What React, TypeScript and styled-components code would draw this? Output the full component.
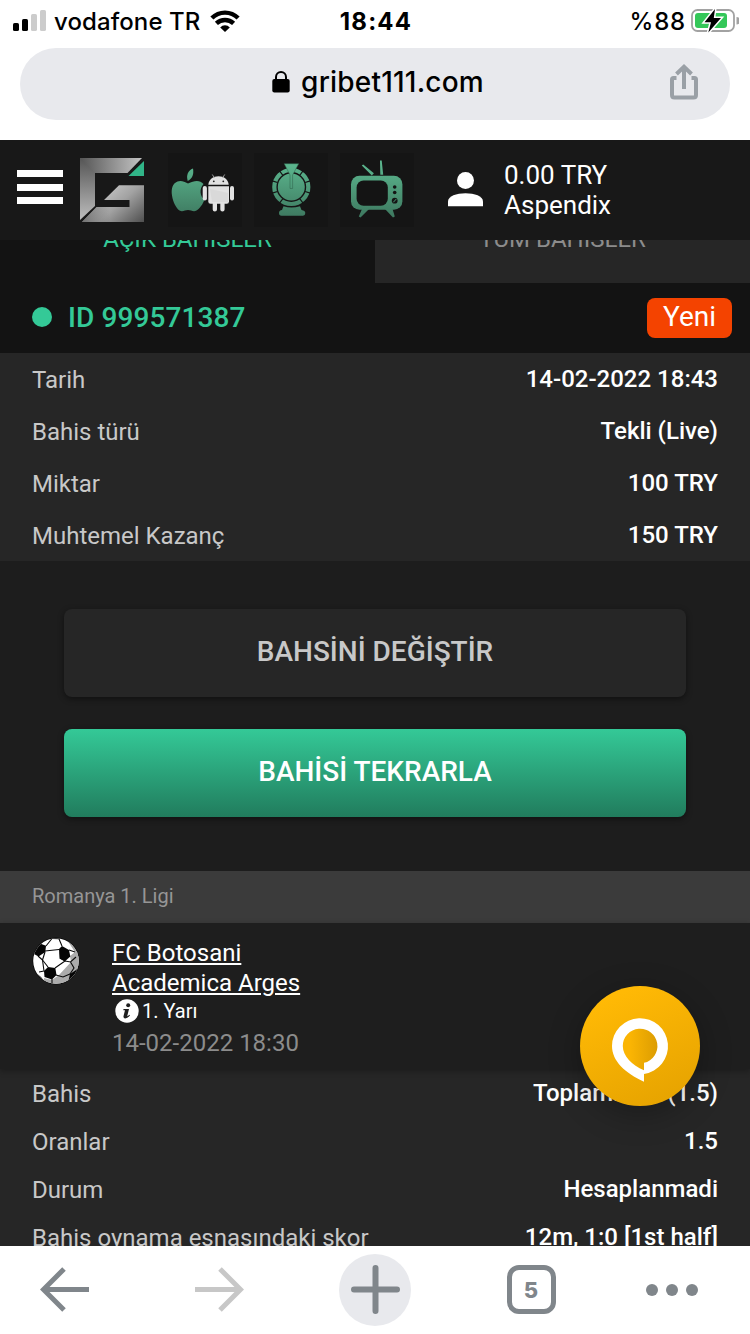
import React from "react";
import styled, { createGlobalStyle } from "styled-components";

const GlobalStyle = createGlobalStyle`
  * { box-sizing: border-box; }
  body { margin: 0; background: #1d1d1d; }
  svg { display: block; flex: none; }
`;

const Screen = styled.div`
  width: 750px;
  height: 1334px;
  overflow: hidden;
  display: flex;
  flex-direction: column;
  background: #1d1d1d;
  font-family: Roboto, "Liberation Sans", sans-serif;
  font-size: 24px;
  color: #fff;
`;

/* Browser chrome */

const BrowserTop = styled.div`
  flex: none;
  height: 140px;
  background: #fff;
  color: #000;
  font-family: Inter, "Liberation Sans", sans-serif;
`;

const StatusBar = styled.div`
  height: 48px;
  padding: 0 11px 8px 13px;
  display: grid;
  grid-template-columns: 1fr auto 1fr;
  align-items: center;
`;

const StatusGroup = styled.div<{ $end?: boolean }>`
  display: flex;
  align-items: center;
  justify-content: ${(p) => (p.$end ? "flex-end" : "flex-start")};
`;

const StatusText = styled.span<{ $bold?: boolean; $spacing: number }>`
  font-size: 24px;
  line-height: 40px;
  padding-top: 2px;
  font-weight: ${(p) => (p.$bold ? 700 : 500)};
  letter-spacing: ${(p) => p.$spacing}px;
`;

const Carrier = styled(StatusText)`
  margin: 0 9px 0 8px;
`;

const BatteryLevel = styled(StatusText)`
  margin-right: 5px;
`;

const AddressBar = styled.div`
  height: 72px;
  margin: 0 20px;
  padding: 0 31px 4px 29px;
  border-radius: 36px;
  background: #e8e9ed;
  display: grid;
  grid-template-columns: 30px 1fr 30px;
  align-items: center;
`;

const Address = styled.div`
  grid-column: 2;
  display: flex;
  justify-content: center;
  align-items: center;
  gap: 11px;
  padding-left: 8px;
  font-size: 28px;
  line-height: 40px;
  font-weight: 550;
  letter-spacing: 0.2px;
`;

/* Site header */

const SiteHeader = styled.header`
  flex: none;
  height: 100px;
  padding: 0 17px;
  background: #181818;
  display: flex;
  align-items: center;
`;

const MenuButton = styled.button`
  width: 46px;
  height: 34px;
  padding: 0;
  margin: 0 17px 6px 0;
  border: 0;
  background: none;
  display: flex;
  flex-direction: column;
  justify-content: space-between;
`;

const MenuLine = styled.span`
  height: 7px;
  background: #fff;
`;

const Shortcuts = styled.nav`
  display: flex;
  gap: 12px;
  margin: 0 34px 0 24px;
`;

const Shortcut = styled.div`
  width: 74px;
  height: 74px;
  background: #151515;
`;

const Account = styled.div`
  margin-left: 21px;
  font-size: 26px;
  line-height: 30px;
`;

/* Bet slip */

const Tabs = styled.div`
  flex: none;
  height: 43px;
  overflow: hidden;
  display: flex;
  align-items: flex-end;
`;

const Tab = styled.div<{ $active?: boolean }>`
  flex: 1;
  height: 88px;
  display: flex;
  align-items: center;
  justify-content: center;
  font-size: 24px;
  background: ${(p) => (p.$active ? "#131313" : "#262626")};
  color: ${(p) => (p.$active ? "#34c997" : "#8c8c8c")};
`;

const BetHeader = styled.div`
  flex: none;
  height: 70px;
  padding: 0 18px 0 32px;
  background: #131313;
  display: flex;
  align-items: center;
`;

const Dot = styled.span`
  width: 20px;
  height: 20px;
  border-radius: 50%;
  margin: 0 16px 2px 0;
  background: #34c997;
`;

const BetId = styled.span`
  flex: 1;
  padding-bottom: 2px;
  font-size: 28px;
  font-weight: 500;
  letter-spacing: 0.1px;
  color: #34c997;
`;

const Badge = styled.span`
  width: 85px;
  height: 40px;
  border-radius: 8px;
  background: #f44300;
  font-size: 28px;
  line-height: 38px;
  text-align: center;
`;

const Rows = styled.dl`
  flex: none;
  margin: 0;
  background: #262626;
`;

const Row = styled.div<{ $height: number }>`
  height: ${(p) => p.$height}px;
  padding: 0 32px;
  display: flex;
  justify-content: space-between;
  align-items: center;
  line-height: 28px;
`;

const Label = styled.dt`
  color: #c8c8c8;
  padding-top: 2px;
`;

const Value = styled.dd`
  margin: 0;
  font-weight: 500;
`;

const Actions = styled.div`
  flex: none;
  height: 310px;
  padding: 48px 64px 0;
  display: flex;
  flex-direction: column;
  gap: 32px;
`;

const ActionButton = styled.button<{ $primary?: boolean }>`
  height: 88px;
  border: 0;
  border-radius: 8px;
  padding: 0 0 4px;
  font: 500 28px Roboto, "Liberation Sans", sans-serif;
  color: ${(p) => (p.$primary ? "#fff" : "#c8c8c8")};
  background: ${(p) => (p.$primary ? "linear-gradient(#34c997, #217c5d)" : "#262626")};
  box-shadow: 0 2px 6px rgba(0, 0, 0, 0.45);
`;

const League = styled.div`
  flex: none;
  height: 52px;
  padding: 0 32px;
  line-height: 51px;
  font-size: 20px;
  color: #969696;
  background: #3b3b3b;
`;

const Match = styled.div`
  flex: none;
  height: 146px;
  padding: 14px 32px 0;
  display: flex;
  gap: 32px;
  background: #1e1e1e;
  box-shadow: 0 2px 6px rgba(0, 0, 0, 0.3);
  z-index: 1;
`;

const Teams = styled.div`
  padding-top: 1px;
`;

const Team = styled.div`
  height: 30px;
  line-height: 30px;
  text-decoration: underline;
  text-decoration-thickness: 2px;
  text-underline-offset: 2px;
`;

const Period = styled.div`
  height: 26px;
  margin-bottom: 1px;
  padding-left: 3px;
  display: flex;
  align-items: center;
  gap: 3px;
  font-size: 20px;
  line-height: 24px;
`;

const Kickoff = styled.div`
  line-height: 36px;
  color: #8c8c8c;
`;

const DetailRows = styled(Rows)`
  flex: 1 1 0;
  min-height: 0;
  overflow: hidden;
`;

const ChatButton = styled.button`
  position: absolute;
  left: 580px;
  top: 986px;
  z-index: 2;
  width: 120px;
  height: 120px;
  padding: 0;
  border: 0;
  border-radius: 50%;
  background: linear-gradient(155deg, #ffb905 15%, #e5a200 95%);
  box-shadow: 0 8px 32px rgba(0, 0, 0, 0.28);
`;

/* Browser toolbar */

const Toolbar = styled.nav`
  flex: none;
  height: 88px;
  padding-bottom: 1px;
  background: #fff;
  display: grid;
  grid-template-columns: 129px 181px 130px 182px 100px;
  justify-items: center;
  align-items: center;
  z-index: 1;
`;

const NewTab = styled.div`
  width: 72px;
  height: 72px;
  border-radius: 50%;
  background: #e8e9ed;
  display: grid;
  place-items: center;
`;

const TabCount = styled.div`
  width: 49px;
  height: 49px;
  border: 5px solid #80868b;
  border-radius: 12px;
  font: 800 22px/41px Inter, "Liberation Sans", sans-serif;
  text-align: center;
  color: #80868b;
`;

const Signal = () => (
  <svg width="33" height="22" viewBox="0 0 33 22">
    <rect x="0" y="13" width="6" height="8" rx="1.6" fill="#000" />
    <rect x="9" y="9" width="6" height="12" rx="1.6" fill="#000" />
    <rect x="18" y="4" width="6" height="17" rx="1.6" fill="#ccc" />
    <rect x="27" y="0" width="6" height="21" rx="1.6" fill="#ccc" />
  </svg>
);

const Wifi = () => (
  <svg width="30" height="22" viewBox="0 0 30 22">
    <g fill="none" stroke="#000" strokeWidth="4.4">
      <path d="M1.9 8A18.6 18.6 0 0 1 28.1 8" />
      <path d="M6.4 13.4A12.4 12.4 0 0 1 23.6 13.4" />
    </g>
    <path d="M15 22L10.2 17.4A6.6 6.6 0 0 1 19.8 17.4Z" fill="#000" />
  </svg>
);

const Battery = () => (
  <svg width="48" height="24" viewBox="0 0 48 24">
    <rect x="1" y="1" width="42" height="21" rx="5.5" fill="none" stroke="#a2a2a2" strokeWidth="1.8" />
    <rect x="4" y="4" width="32" height="15" rx="3" fill="#34c759" />
    <path d="M45.5 8a3.6 3.6 0 0 1 0 7.5z" fill="#a2a2a2" />
    <path d="M24 0L13.5 13.2H20L17.3 23.5L30 9H22.8Z" fill="#000" stroke="#fff" strokeWidth="3" />
    <path d="M24 0L13.5 13.2H20L17.3 23.5L30 9H22.8Z" fill="#000" />
  </svg>
);

const Lock = () => (
  <svg width="18" height="22" viewBox="0 0 18 22">
    <path d="M4 9V6a5 5 0 0 1 10 0v3" fill="none" stroke="#000" strokeWidth="2" />
    <rect x="0.3" y="8" width="17.4" height="13.5" rx="2" fill="#000" />
  </svg>
);

const Share = () => (
  <svg width="30" height="36" viewBox="0 0 30 36" fill="none" stroke="#9aa0a6" strokeWidth="4">
    <path d="M7.5 14H4.5Q3 14 3 15.5V31Q3 33.5 5.5 33.5H24.5Q27 33.5 27 31V15.5Q27 14 25.5 14H22.5" />
    <path d="M15 25V3M7.5 10L15 2.8L22.5 10" />
  </svg>
);

const Logo = () => (
  <svg width="64" height="64" viewBox="0 0 64 64">
    <defs>
      <linearGradient id="logoTop" x1="0" y1="0" x2="62" y2="0" gradientUnits="userSpaceOnUse">
        <stop offset="0" stopColor="#555" />
        <stop offset="1" stopColor="#c4c4c4" />
      </linearGradient>
      <linearGradient id="logoSide" x1="0" y1="0" x2="0" y2="62" gradientUnits="userSpaceOnUse">
        <stop offset="0" stopColor="#555" />
        <stop offset="1" stopColor="#bdbdbd" />
      </linearGradient>
      <linearGradient id="logoBottom" x1="28" y1="30" x2="60" y2="66" gradientUnits="userSpaceOnUse">
        <stop offset="0" stopColor="#c2c2c2" />
        <stop offset="0.4" stopColor="#a2a2a2" />
        <stop offset="1" stopColor="#525252" />
      </linearGradient>
      <linearGradient id="logoFoot" x1="2" y1="0" x2="30" y2="0" gradientUnits="userSpaceOnUse">
        <stop offset="0" stopColor="#606060" stopOpacity="0.8" />
        <stop offset="1" stopColor="#606060" stopOpacity="0" />
      </linearGradient>
    </defs>
    <path d="M0 0H62L47.5 15H0Z" fill="url(#logoTop)" />
    <path d="M0 0L15 15V48L0 62Z" fill="url(#logoSide)" />
    <path d="M2 64L16.5 49H49.5V42H24L39 27.3H64V64Z" fill="url(#logoBottom)" />
    <path d="M2 64L16.5 49H32V64Z" fill="url(#logoFoot)" />
    <path d="M64 3V18H48.5Z" fill="#31b588" />
  </svg>
);

const GreenFill = ({ id }: { id: string }) => (
  <defs>
    <linearGradient id={id} x1="0" y1="8" x2="0" y2="64" gradientUnits="userSpaceOnUse">
      <stop offset="0" stopColor="#5dba91" />
      <stop offset="1" stopColor="#3e7960" />
    </linearGradient>
  </defs>
);

const AppsIcon = () => (
  <svg width="74" height="74" viewBox="0 0 74 74">
    <GreenFill id="appsGreen" />
    <g fill="url(#appsGreen)">
      <path d="M19.7 28C18 22 20 17.5 25 15.5C26 21 24.5 25.5 19.7 28Z" />
      <path d="M20 30.5C16 28.5 13 27 9.5 28.5C4.5 30.5 3 36 4 42.5C5 49 8 55 11.5 57.5C14.5 59.3 17 57 20 57C23 57 25.5 59.3 28.5 57.5C31.5 55.8 35 51 36.3 47C32 43 31 36 35.5 31C32 27 27 27 20 30.5Z" />
    </g>
    <g fill="#e2e2e2">
      <path d="M40.3 31.8C40.8 26.5 45 23.3 50.5 23.3S60.2 26.5 60.7 31.8Z" />
      <path d="M40.3 33.3H61V48.5Q61 50.7 58.8 50.7H42.5Q40.3 50.7 40.3 48.5Z" />
      <rect x="34.7" y="33" width="4.2" height="14.5" rx="2.1" />
      <rect x="62" y="33" width="4" height="14.5" rx="2" />
      <path d="M44.7 50H49V56.4A2.1 2.1 0 0 1 44.7 56.4ZM52.3 50H56.6V56.4A2.1 2.1 0 0 1 52.3 56.4Z" />
    </g>
    <path d="M44.3 21.5L46.5 25M56.7 21.5L54.5 25" stroke="#aaa" strokeWidth="0.9" />
    <circle cx="45.8" cy="28.3" r="0.9" fill="#222" />
    <circle cx="55.3" cy="28.3" r="0.9" fill="#222" />
    <path d="M42 36L60 40V49H44Z" fill="#cfcfcf" opacity="0.45" />
  </svg>
);

const WheelIcon = () => (
  <svg width="74" height="74" viewBox="0 0 74 74">
    <GreenFill id="wheelGreen" />
    <circle cx="37.3" cy="34" r="17" fill="none" stroke="url(#wheelGreen)" strokeWidth="4.2" />
    <g stroke="#141414" strokeWidth="1.2">
      {[36, 72, 108, 144, 216, 252, 288, 324].map((angle) => (
        <path key={angle} d="M37.3 19.5V14" transform={`rotate(${angle} 37.3 34)`} />
      ))}
    </g>
    <circle cx="37.3" cy="34" r="13.5" fill="url(#wheelGreen)" />
    <g fill="url(#wheelGreen)">
      <path d="M29.5 53.2Q37.3 55.8 46 53.2L47.5 57Q51.3 57.5 51.3 60T49 62.7H27.5Q25 62.7 25 60T28 57Z" />
      <path d="M30.2 10.7H44.7L38.6 22V35.5H36V22Z" stroke="#2f604b" strokeWidth="0.5" />
    </g>
  </svg>
);

const TvIcon = () => (
  <svg width="74" height="74" viewBox="0 0 74 74">
    <GreenFill id="tvGreen" />
    <g fill="url(#tvGreen)">
      <path d="M21.8 12.4L23.2 11.4L33.9 20.2L31.8 22.4ZM40 7.5H41.7L43.2 21.7H40.3Z" />
      <rect x="11" y="22.7" width="51.4" height="34" rx="8.5" />
      <path d="M22 56H29L20.5 64.4L18.8 63.5ZM45 56H52.5L54.8 63.5L53 64.4Z" />
    </g>
    <rect x="16.6" y="27.4" width="31.2" height="25.4" rx="7" fill="#141414" />
    <circle cx="54.7" cy="34" r="1.8" fill="#141414" />
    <circle cx="54.7" cy="39.5" r="1.8" fill="#141414" />
    <circle cx="54.7" cy="47.7" r="2.9" fill="#141414" />
    <path d="M53.3 49.3L56.3 46" stroke="#4b9676" strokeWidth="1" />
  </svg>
);

const Person = () => (
  <svg width="35" height="36" viewBox="0 0 35 36" fill="#fff">
    <circle cx="17.5" cy="8.5" r="8.5" />
    <path d="M0 34.2V29.5C0 24 8.5 21.2 17.5 21.2S35 24 35 29.5V34.2Z" />
  </svg>
);

const Football = () => (
  <svg width="48" height="48" viewBox="0 0 48 48">
    <defs>
      <clipPath id="ballEdge">
        <circle cx="24" cy="24" r="22.8" />
      </clipPath>
    </defs>
    <circle cx="24" cy="24" r="23.5" fill="#080808" />
    <g clipPath="url(#ballEdge)">
      <rect width="48" height="48" fill="#fff" />
      <path d="M33 0L37 6L43 15L38 19L39 25L27 38L20 43L12 41V48H48V0Z" fill="#ababab" />
      <g fill="none" stroke="#0a0a0a" strokeWidth="1.1">
        <path d="M13 14L27 12.5M28 21L33 24L23 31M16 30L10.5 23L13 15M10.5 23L6 19" />
        <path d="M14 9L20 1.5M30 9L27 2M37 13L43 15M33 24L38.5 25L44 20M38.5 25L42 31L38 37" />
        <path d="M24 38L31 40L38 37M20 42V48M12 34L7 35M10.5 23L12 34" />
      </g>
      <g fill="#050505">
        <path d="M3.5 11L8 6.5L14 8.8L13.3 15L6.5 19.5L2 17Z" />
        <path d="M27 12L30 9L37 13L38.3 19.5L33 24.3L27.5 21.5Z" />
        <path d="M12 34L16 30L23.3 31L24.5 38L20 42.5L12.5 40Z" />
        <path d="M38 37L47 31V40L42 44L36.5 43.5Z" />
        <path d="M17 0H30L27.5 2.2L20 2Z" />
        <path d="M0 32L3 35L9 40L12 44L5 44Z" />
      </g>
    </g>
  </svg>
);

const Info = () => (
  <svg width="24" height="24" viewBox="0 0 24 24">
    <circle cx="12" cy="12" r="11.7" fill="#fff" />
    <circle cx="13.2" cy="6.3" r="2" fill="#1e1e1e" />
    <path d="M8.5 10H14L12.2 17.2Q12.8 17.4 14.4 15.8L15 16.4Q12.6 19.4 10.2 19.4Q8 19.3 8.6 16.8L10 11.3H8.3Z" fill="#1e1e1e" />
  </svg>
);

const ChatIcon = () => (
  <svg width="120" height="120" viewBox="0 0 120 120">
    <defs>
      <linearGradient id="chatHole" x1="0" x2="1">
        <stop offset="0.2" stopColor="#fbb503" />
        <stop offset="1" stopColor="#dc9d02" />
      </linearGradient>
    </defs>
    <path d="M64 87.9A28 28 0 1 0 32 60C32 75 45 87 64 95.8Z" fill="#fff" />
    <path d="M64 76.8A17.3 17.3 0 1 0 42.8 60C42.8 70 52 79 64 84.3Z" fill="url(#chatHole)" />
  </svg>
);

const Arrow = ({ forward }: { forward?: boolean }) => (
  <svg width="49" height="46" viewBox="0 0 49 46" fill="none" stroke={forward ? "#c7c7c7" : "#80868b"} strokeWidth="5">
    {forward ? <path d="M0 22.5H45M25 2L45.5 22.5L25 43" /> : <path d="M49 22.5H4M24 2L3.5 22.5L24 43" />}
  </svg>
);

const Plus = () => (
  <svg width="49" height="49" viewBox="0 0 49 49" stroke="#80868b" strokeWidth="6" strokeLinecap="round">
    <path d="M24.5 3V46M3 24.5H46" />
  </svg>
);

const More = () => (
  <svg width="52" height="12" viewBox="0 0 52 12" fill="#80868b">
    <circle cx="6" cy="6" r="6" />
    <circle cx="26" cy="6" r="6" />
    <circle cx="46" cy="6" r="6" />
  </svg>
);

const summary = [
  ["Tarih", "14-02-2022 18:43"],
  ["Bahis türü", "Tekli (Live)"],
  ["Miktar", "100 TRY"],
  ["Muhtemel Kazanç", "150 TRY"],
];

const details = [
  ["Bahis", "Toplam: Üst (1.5)"],
  ["Oranlar", "1.5"],
  ["Durum", "Hesaplanmadi"],
  ["Bahis oynama esnasındaki skor", "12m, 1:0 [1st half]"],
];

export default function App() {
  return (
    <Screen>
      <GlobalStyle />
      <BrowserTop>
        <StatusBar>
          <StatusGroup>
            <Signal />
            <Carrier $spacing={0.1}>vodafone TR</Carrier>
            <Wifi />
          </StatusGroup>
          <StatusText $bold $spacing={1.2}>18:44</StatusText>
          <StatusGroup $end>
            <BatteryLevel $spacing={0.8}>%88</BatteryLevel>
            <Battery />
          </StatusGroup>
        </StatusBar>
        <AddressBar>
          <Address>
            <Lock />
            gribet111.com
          </Address>
          <Share />
        </AddressBar>
      </BrowserTop>

      <SiteHeader>
        <MenuButton aria-label="Menü">
          <MenuLine />
          <MenuLine />
          <MenuLine />
        </MenuButton>
        <Logo />
        <Shortcuts>
          <Shortcut><AppsIcon /></Shortcut>
          <Shortcut><WheelIcon /></Shortcut>
          <Shortcut><TvIcon /></Shortcut>
        </Shortcuts>
        <Person />
        <Account>
          <div>0.00 TRY</div>
          <div>Aspendix</div>
        </Account>
      </SiteHeader>

      <Tabs>
        <Tab $active>AÇIK BAHİSLER</Tab>
        <Tab>TÜM BAHİSLER</Tab>
      </Tabs>

      <BetHeader>
        <Dot />
        <BetId>ID 999571387</BetId>
        <Badge>Yeni</Badge>
      </BetHeader>

      <Rows>
        {summary.map(([label, value]) => (
          <Row key={label} $height={52}>
            <Label>{label}</Label>
            <Value>{value}</Value>
          </Row>
        ))}
      </Rows>

      <Actions>
        <ActionButton>BAHSİNİ DEĞİŞTİR</ActionButton>
        <ActionButton $primary>BAHİSİ TEKRARLA</ActionButton>
      </Actions>

      <League>Romanya 1. Ligi</League>
      <Match>
        <Football />
        <Teams>
          <Team>FC Botosani</Team>
          <Team>Academica Arges</Team>
          <Period>
            <Info />
            1. Yarı
          </Period>
          <Kickoff>14-02-2022 18:30</Kickoff>
        </Teams>
      </Match>

      <DetailRows>
        {details.map(([label, value]) => (
          <Row key={label} $height={48}>
            <Label>{label}</Label>
            <Value>{value}</Value>
          </Row>
        ))}
      </DetailRows>

      <ChatButton aria-label="Canlı destek">
        <ChatIcon />
      </ChatButton>

      <Toolbar>
        <Arrow />
        <Arrow forward />
        <NewTab><Plus /></NewTab>
        <TabCount>5</TabCount>
        <More />
      </Toolbar>
    </Screen>
  );
}
